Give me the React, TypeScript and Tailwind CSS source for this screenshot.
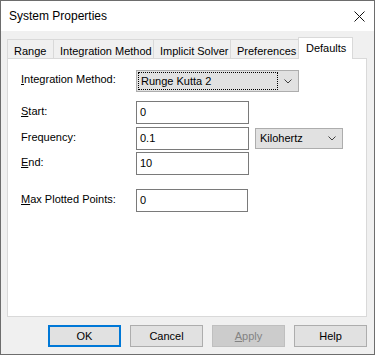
import { ReactNode } from 'react';

const font = { fontFamily: '"Liberation Sans", Arial, sans-serif' };

function Chevron() {
  return (
    <svg width="8" height="5" viewBox="0 0 8 5" className="shrink-0">
      <path d="M0.5 0.5 L4 4 L7.5 0.5" fill="none" stroke="#404040" strokeWidth="1" />
    </svg>
  );
}

function Tab({ label, width, active }: { label: string; width: string; active?: boolean }) {
  if (active) {
    return (
      <div
        className={`relative z-10 -ml-[2px] -mb-px h-[22px] ${width} border border-b-0 border-[#d9d9d9] bg-white pl-[7px] pt-[2px] text-[11px] text-black`}
      >
        {label}
      </div>
    );
  }
  return (
    <div
      className={`-ml-px first:ml-0 h-[19px] ${width} border border-b-0 border-[#d9d9d9] bg-[#f0f0f0] pl-[6px] pt-[3px] text-[11px] text-black`}
    >
      {label}
    </div>
  );
}

function Row({ label, children, className }: { label: ReactNode; children: ReactNode; className?: string }) {
  return (
    <div className={`flex items-center ${className ?? ''}`}>
      <div className="w-[115px] -mt-[3px] text-[11px] leading-none text-black">{label}</div>
      {children}
    </div>
  );
}

function TextBox({ value, width = 'w-[113px]' }: { value: string; width?: string }) {
  return (
    <div className={`h-[23px] ${width} border border-[#7a7a7a] bg-white pl-[3px] pt-[3px] text-[11px] leading-[14px] text-black`}>
      {value}
    </div>
  );
}

function Button({ label, primary, disabled }: { label: ReactNode; primary?: boolean; disabled?: boolean }) {
  let cls = 'border border-[#adadad] bg-[#e1e1e1] text-black';
  if (primary) cls = 'border-2 border-[#0078d7] bg-[#e1e1e1] text-black';
  if (disabled) cls = 'border border-[#bfbfbf] bg-[#cccccc] text-[#838383]';
  return (
    <div className={`flex h-[22px] w-[73px] items-center justify-center text-[11px] ${cls}`}>{label}</div>
  );
}

export default function App() {
  return (
    <div style={font} className="flex h-[355px] w-[375px] flex-col border border-[#6d6d6d] bg-[#f0f0f0]">
      <div className="flex h-[30px] items-center justify-between bg-white pl-[8px] pr-[9px]">
        <span className="text-[12px] text-black">System Properties</span>
        <svg width="11" height="11" viewBox="0 0 11 11">
          <path d="M0.5 0.5 L10.5 10.5 M10.5 0.5 L0.5 10.5" stroke="#111" strokeWidth="1" />
        </svg>
      </div>

      <div className="mt-[6px] flex h-[21px] items-end pl-[6px]">
        <Tab label="Range" width="w-[47px]" />
        <Tab label="Integration Method" width="w-[101px]" />
        <Tab label="Implicit Solver" width="w-[78px]" />
        <Tab label="Preferences" width="w-[70px]" />
        <Tab label="Defaults" width="w-[55px]" active />
      </div>

      <div className="ml-[6px] flex h-[259px] w-[360px] flex-col border border-[#d9d9d9] bg-white pl-[13px] pt-[11px]">
        <Row label={<><u>I</u>ntegration Method:</>}>
          <div className="flex h-[22px] w-[163px] items-center border border-[#adadad] bg-[#e1e1e1] pl-[1px] pr-[6px]">
            <div className="flex h-[18px] w-[140px] items-center border border-dotted border-black pl-[2px] text-[11px] text-black">
              Runge Kutta 2
            </div>
            <div className="flex-1" />
            <Chevron />
          </div>
        </Row>
        <Row label={<><u>S</u>tart:</>} className="mt-[9px]">
          <TextBox value="0" />
        </Row>
        <Row label="Frequency:" className="mt-[3px]">
          <TextBox value="0.1" />
          <div className="ml-[6px] flex h-[21px] w-[88px] items-center justify-between border border-[#adadad] bg-[#e1e1e1] pl-[4px] pr-[6px] text-[11px] text-black">
            Kilohertz
            <Chevron />
          </div>
        </Row>
        <Row label={<><u>E</u>nd:</>} className="mt-[2px]">
          <TextBox value="10" />
        </Row>
        <Row label={<><u>M</u>ax Plotted Points:</>} className="mt-[14px]">
          <TextBox value="0" width="w-[112px]" />
        </Row>
      </div>

      <div className="mt-[8px] flex justify-end gap-[9px] pr-[7px]">
        <Button label="OK" primary />
        <Button label="Cancel" />
        <Button label={<><u>A</u>pply</>} disabled />
        <Button label="Help" />
      </div>
    </div>
  );
}
